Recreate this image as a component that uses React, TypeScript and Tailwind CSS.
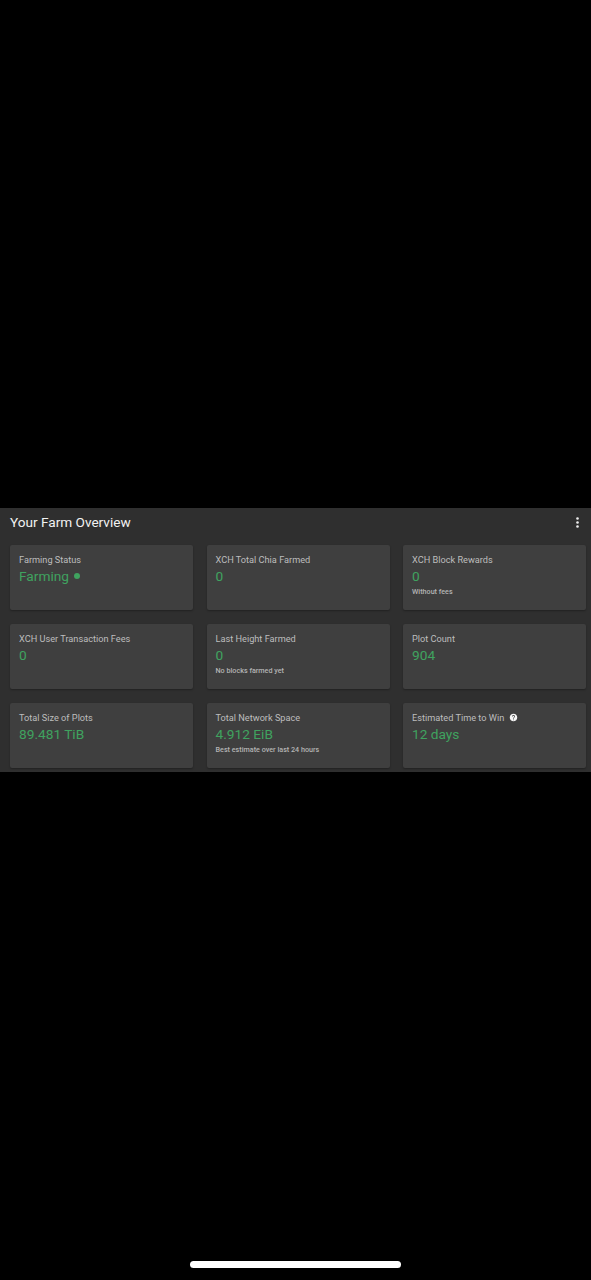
import React from 'react';

type Stat = {
  title: string;
  value: string;
  note?: string;
  dot?: boolean;
  help?: boolean;
};

const stats: Stat[] = [
  { title: 'Farming Status', value: 'Farming', dot: true },
  { title: 'XCH Total Chia Farmed', value: '0' },
  { title: 'XCH Block Rewards', value: '0', note: 'Without fees' },
  { title: 'XCH User Transaction Fees', value: '0' },
  { title: 'Last Height Farmed', value: '0', note: 'No blocks farmed yet' },
  { title: 'Plot Count', value: '904' },
  { title: 'Total Size of Plots', value: '89.481 TiB' },
  { title: 'Total Network Space', value: '4.912 EiB', note: 'Best estimate over last 24 hours' },
  { title: 'Estimated Time to Win', value: '12 days', help: true },
];

function HelpIcon() {
  return (
    <svg width="9" height="9" viewBox="0 0 24 24" className="ml-[5px]">
      <path
        fill="#f5f5f5"
        d="M12 2C6.48 2 2 6.48 2 12s4.48 10 10 10 10-4.48 10-10S17.52 2 12 2zm1 17h-2v-2h2v2zm2.07-7.75l-.9.92C13.45 12.9 13 13.5 13 15h-2v-.5c0-1.1.45-2.1 1.17-2.83l1.24-1.26c.37-.36.59-.86.59-1.41 0-1.1-.9-2-2-2s-2 .9-2 2H8c0-2.21 1.79-4 4-4s4 1.79 4 4c0 .88-.36 1.68-.93 2.25z"
      />
    </svg>
  );
}

function StatCard({ stat }: { stat: Stat }) {
  return (
    <div className="h-[65px] rounded-[2px] bg-[#3f3f3f] px-[9px] pt-[8px] shadow-[0_1px_2px_rgba(0,0,0,0.3)]">
      <div className="flex h-[13px] items-center text-[9.2px] leading-[13px] text-[#bdbdbd]">
        {stat.title}
        {stat.help && <HelpIcon />}
      </div>
      <div className="flex h-[20px] items-center text-[13.7px] leading-[20px] text-[#3fa35f]">
        {stat.value}
        {stat.dot && <span className="ml-[5px] size-[6px] rounded-full bg-[#3fa35f]" />}
      </div>
      {stat.note && (
        <div className="mt-[1px] text-[7.2px] font-medium leading-[10px] text-[#b4b4b4]">{stat.note}</div>
      )}
    </div>
  );
}

export default function App() {
  return (
    <div className="relative flex h-[1280px] items-center bg-black font-['Roboto',sans-serif] antialiased">
      <section className="h-[264px] w-full bg-[#2f2f2f] pl-[10px] pr-[5px]">
        <header className="flex h-[37px] items-center justify-between pb-[9px] pr-[7px] pt-[1px]">
          <h1 className="text-[13.6px] font-normal text-[#f2f2f2]">Your Farm Overview</h1>
          <svg width="3" height="11" viewBox="0 0 3 11">
            <circle cx="1.5" cy="1.5" r="1.3" fill="#eeeeee" />
            <circle cx="1.5" cy="5.5" r="1.3" fill="#eeeeee" />
            <circle cx="1.5" cy="9.5" r="1.3" fill="#eeeeee" />
          </svg>
        </header>
        <div className="grid grid-cols-3 gap-x-[13.5px] gap-y-[14px]">
          {stats.map((stat) => (
            <StatCard key={stat.title} stat={stat} />
          ))}
        </div>
      </section>
      <div className="absolute bottom-[12px] left-[190px] h-[7px] w-[211px] rounded-full bg-white" />
    </div>
  );
}
